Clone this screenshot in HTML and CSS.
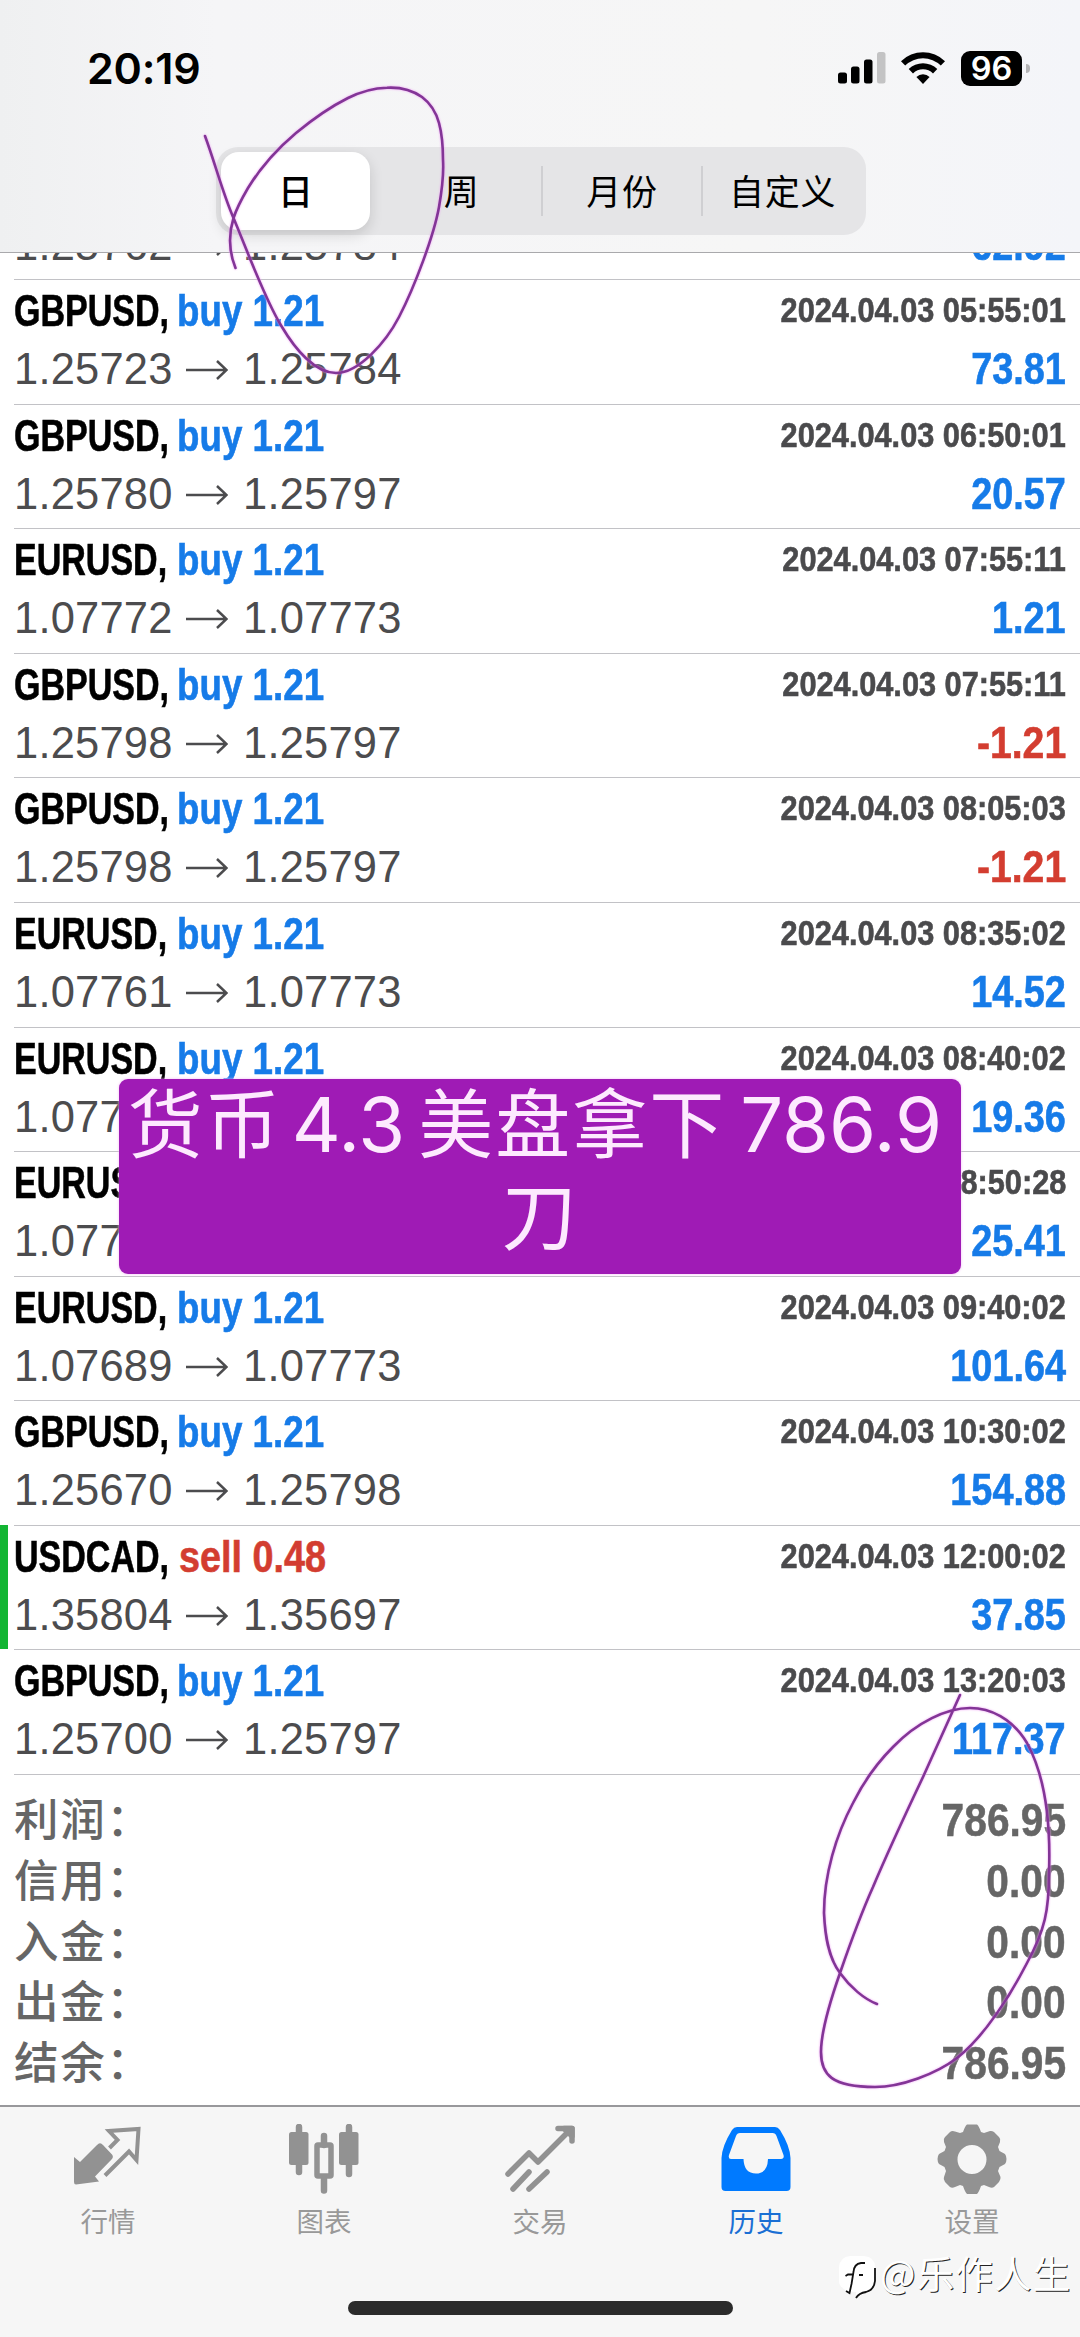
FILE: index.html
```html
<!DOCTYPE html>
<html lang="zh-CN">
<head>
<meta charset="utf-8">
<title>历史</title>
<link rel="stylesheet" href="styles.css">
</head>
<body>
<div class="phone">
  <header class="top">
    <div class="status">
      <span class="clock">20:19</span>
      <div class="status-icons">
        <svg class="signal" width="48" height="32" viewBox="0 0 48 32"><rect x="0" y="20.500" width="9" height="11" rx="2.500"/><rect x="13" y="14.500" width="8.500" height="17" rx="2.500"/><rect x="26" y="7.500" width="8.500" height="24" rx="2.500"/><rect x="39" y="0" width="8.500" height="31.500" rx="2.500" fill="#c3c3c4"/></svg>
        <svg class="wifi" width="46" height="34" viewBox="0 0 46 34"><path d="M1 10.200A31.500 31.500 0 0 1 45 10.200L40.800 14.600A25.400 25.400 0 0 0 5.200 14.600Z"/><path d="M8.700 18A20.400 20.400 0 0 1 37.300 18L33 22.400A14.300 14.300 0 0 0 13 22.400Z"/><path d="M16.400 26A9.500 9.500 0 0 1 29.600 26L23 33Z"/></svg>
        <div class="battery"><span>96</span></div>
        <i class="nub"></i>
      </div>
    </div>
    <nav class="segmented">
      <span class="seg on">日</span><span class="seg">周</span><span class="seg line">月份</span><span class="seg line">自定义</span>
    </nav>
  </header>

  <main class="list">
    <section class="deal cut"><div class="price"><span>1.25762</span><svg width="42" height="20" viewBox="0 0 42 20"><path d="M0 10H40M31 1L40.500 10L31 19"/></svg><span>1.25784</span></div><div class="val buy"><b>62.92</b></div></section>
    <section class="deal"><div class="sym"><b>GBPUSD,</b></div><div class="side buy"><b>buy 1.21</b></div><time><b>2024.04.03 05:55:01</b></time><div class="price"><span>1.25723</span><svg width="42" height="20" viewBox="0 0 42 20"><path d="M0 10H40M31 1L40.500 10L31 19"/></svg><span>1.25784</span></div><div class="val buy"><b>73.81</b></div></section>
    <section class="deal"><div class="sym"><b>GBPUSD,</b></div><div class="side buy"><b>buy 1.21</b></div><time><b>2024.04.03 06:50:01</b></time><div class="price"><span>1.25780</span><svg width="42" height="20" viewBox="0 0 42 20"><path d="M0 10H40M31 1L40.500 10L31 19"/></svg><span>1.25797</span></div><div class="val buy"><b>20.57</b></div></section>
    <section class="deal"><div class="sym"><b>EURUSD,</b></div><div class="side buy"><b>buy 1.21</b></div><time><b>2024.04.03 07:55:11</b></time><div class="price"><span>1.07772</span><svg width="42" height="20" viewBox="0 0 42 20"><path d="M0 10H40M31 1L40.500 10L31 19"/></svg><span>1.07773</span></div><div class="val buy"><b>1.21</b></div></section>
    <section class="deal"><div class="sym"><b>GBPUSD,</b></div><div class="side buy"><b>buy 1.21</b></div><time><b>2024.04.03 07:55:11</b></time><div class="price"><span>1.25798</span><svg width="42" height="20" viewBox="0 0 42 20"><path d="M0 10H40M31 1L40.500 10L31 19"/></svg><span>1.25797</span></div><div class="val loss"><b>-1.21</b></div></section>
    <section class="deal"><div class="sym"><b>GBPUSD,</b></div><div class="side buy"><b>buy 1.21</b></div><time><b>2024.04.03 08:05:03</b></time><div class="price"><span>1.25798</span><svg width="42" height="20" viewBox="0 0 42 20"><path d="M0 10H40M31 1L40.500 10L31 19"/></svg><span>1.25797</span></div><div class="val loss"><b>-1.21</b></div></section>
    <section class="deal"><div class="sym"><b>EURUSD,</b></div><div class="side buy"><b>buy 1.21</b></div><time><b>2024.04.03 08:35:02</b></time><div class="price"><span>1.07761</span><svg width="42" height="20" viewBox="0 0 42 20"><path d="M0 10H40M31 1L40.500 10L31 19"/></svg><span>1.07773</span></div><div class="val buy"><b>14.52</b></div></section>
    <section class="deal"><div class="sym"><b>EURUSD,</b></div><div class="side buy"><b>buy 1.21</b></div><time><b>2024.04.03 08:40:02</b></time><div class="price"><span>1.077</span></div><div class="val buy"><b>19.36</b></div></section>
    <section class="deal"><div class="sym"><b>EURUSD,</b></div><div class="side"></div><time><b>08:50:28</b></time><div class="price"><span>1.077</span></div><div class="val buy"><b>25.41</b></div></section>
    <section class="deal"><div class="sym"><b>EURUSD,</b></div><div class="side buy"><b>buy 1.21</b></div><time><b>2024.04.03 09:40:02</b></time><div class="price"><span>1.07689</span><svg width="42" height="20" viewBox="0 0 42 20"><path d="M0 10H40M31 1L40.500 10L31 19"/></svg><span>1.07773</span></div><div class="val buy"><b>101.64</b></div></section>
    <section class="deal"><div class="sym"><b>GBPUSD,</b></div><div class="side buy"><b>buy 1.21</b></div><time><b>2024.04.03 10:30:02</b></time><div class="price"><span>1.25670</span><svg width="42" height="20" viewBox="0 0 42 20"><path d="M0 10H40M31 1L40.500 10L31 19"/></svg><span>1.25798</span></div><div class="val buy"><b>154.88</b></div></section>
    <section class="deal tp"><div class="sym"><b>USDCAD,</b></div><div class="side loss"><b>sell 0.48</b></div><time><b>2024.04.03 12:00:02</b></time><div class="price"><span>1.35804</span><svg width="42" height="20" viewBox="0 0 42 20"><path d="M0 10H40M31 1L40.500 10L31 19"/></svg><span>1.35697</span></div><div class="val buy"><b>37.85</b></div></section>
    <section class="deal"><div class="sym"><b>GBPUSD,</b></div><div class="side buy"><b>buy 1.21</b></div><time><b>2024.04.03 13:20:03</b></time><div class="price"><span>1.25700</span><svg width="42" height="20" viewBox="0 0 42 20"><path d="M0 10H40M31 1L40.500 10L31 19"/></svg><span>1.25797</span></div><div class="val buy"><b>117.37</b></div></section>

    <dl class="summary">
      <div><dt>利润：</dt><dd>786.95</dd></div>
      <div><dt>信用：</dt><dd>0.00</dd></div>
      <div><dt>入金：</dt><dd>0.00</dd></div>
      <div><dt>出金：</dt><dd>0.00</dd></div>
      <div><dt>结余：</dt><dd>786.95</dd></div>
    </dl>
  </main>

  <nav class="tabs">
    <a class="tab"><svg width="72" height="72" viewBox="0 0 72 72"><path d="M2 33L8 38L25 21Q28 17.500 31 21L40 30.500Q42 33 39.500 35.500L23 52.500L27 57.500L4 60.500Q2 60.500 2 58Z"/><path d="M37.500 24L45.500 16L37 7L66.500 5L64.500 36L57 27.500L33 51.500" fill="none" stroke="#929292" stroke-width="4"/></svg>行情</a>
    <a class="tab"><svg width="72" height="72" viewBox="0 0 72 72"><path d="M11 3V48M61 3V50M36 12V21M36 55V66.500" fill="none" stroke="#929292" stroke-width="6.500" stroke-linecap="round"/><rect x="1" y="8" width="19.500" height="33" rx="2.500"/><rect x="51" y="8" width="19.500" height="33" rx="2.500"/><rect x="29" y="21" width="14" height="31" rx="1" fill="none" stroke="#929292" stroke-width="5.500"/></svg>图表</a>
    <a class="tab"><svg width="72" height="72" viewBox="0 0 72 72" fill="none" stroke="#929292" stroke-width="5.500" stroke-linecap="round" stroke-linejoin="round"><path d="M4 50L25 29L34 38L67 5M54 4.500H68V17M9 65L25 48M25 65L43 48"/><path d="M60 4.500H68V12Z" fill="#929292"/></svg>交易</a>
    <a class="tab active"><svg width="72" height="72" viewBox="0 0 72 72"><path fill-rule="evenodd" d="M17 3H55Q58 3 60 6Q70 22 70.500 34V63Q70.500 67 66.500 67H5.500Q1.500 67 1.500 63V34Q2 22 12 6Q14 3 17 3ZM20 9Q17 9 16 12L9 31Q8 35 11 35H23.500Q24 49.500 36 49.500Q47.500 49.500 48 35H61Q64.500 35 63.500 31L56.500 12Q55.500 9 52.500 9Z"/></svg>历史</a>
    <a class="tab"><svg width="72" height="72" viewBox="0 0 72 72"><path fill-rule="evenodd" d="M31 .5H41Q43 2 45 8L48 9L54 7Q56 6.500 58 8L63 13Q65 15 64 18L62 23L63.500 27L69 30Q70.500 32 70.500 35Q70.500 38 69 40L63.500 43L62 47L64.500 53Q65 55 63 58L58 63Q56 64.500 53 63L48 61L45 62Q43 68 41 70H31Q29 68 27 62L24 61L19 63Q16 64.500 14 63L9 58Q7 55 8 53L10 47L8.500 43L3 40Q1.500 38 1.500 35Q1.500 32 3 30L8.500 27L10 23L8 18Q7 15 9 13L14 8Q16 6.500 19 7.500L24 9L27 8Q29 2 31 .5ZM36 21A14.500 14.500 0 1 0 36 50A14.500 14.500 0 1 0 36 21Z"/></svg>设置</a>
    <i class="home"></i>
  </nav>

  <div class="caption"><p>货币<em class="a">4.3</em>美盘拿下<em class="b">786.9</em><br>刀</p></div>

  <svg class="ink" width="1080" height="2337" viewBox="0 0 1080 2337">
    <path d="M205 136C215 163 223 194 233.500 218C247 250 265 300 282 327C295 349 315 373 336 373C359 373 386 342 399 317C415 286 434 235 439 207C442 190 444 176 443 160C443 147 442 134 439 123C436 112 430 103 422 97C412 90 400 87 387 87.700C374 88 362 91 348 98C330 107 313 119 296 133C277 149 259 170 248 188C241 200 237 207 233.500 218C228 236 229 252 235.500 268"/>
    <path d="M960 1695C948 1721 936 1748 923 1777C905 1815 889 1849 873 1887C860 1916 850 1944 840 1973C833 1993 821 2030 821 2052C821 2075 832 2087 875 2087C901 2087 936 2074 957 2058C985 2036 1011 1994 1027 1963C1045 1930 1049 1910 1049 1873C1050 1845 1050 1785 1027 1743C1012 1718 990 1708 970 1708C947 1708 917 1722 893 1747C877 1763 864 1781 853 1803C836 1835 824 1875 824 1913C825 1935 828 1957 840 1973C850 1987 864 1999 877 2004"/>
  </svg>

  <div class="mark">
    <svg width="42" height="48" viewBox="0 0 42 48"><path d="M12 1H26Q37 2 37 12V27Q37 37 26 38L18 44V37L9 36Q1 32 1 26V12Q2 2 12 1Z" fill="#fff"/><path d="M27 8H23Q16 9 15.500 17L13.500 29L11.500 38L8 36M7.500 21L10 19.500H15M21 20H25M37 13V26Q36 35 28 37Q21 38 18 43" fill="none" stroke="#111" stroke-width="1.800"/></svg>
    <span>@乐作人生</span>
  </div>
</div>
</body>
</html>
```
FILE: styles.css
```css
* { box-sizing: border-box; }
body { margin: 0; background: #fff; font-family: "Liberation Sans", "Noto Sans CJK SC", sans-serif; }
.phone { position: relative; display: flex; flex-direction: column; width: 1080px; height: 2337px; overflow: hidden; background: #fff; }

.top { height: 253px; flex: none; background: linear-gradient(90deg, #eff0f1 0, #f5f5f7 20%, #f6f6f6 70%, #f4f5f9 100%); border-bottom: 1px solid #a9a9ac; }
.status { display: flex; justify-content: space-between; height: 147px; padding: 0 50px 0 87px; }
.clock { padding-top: 42px; font: 600 43px/52px Inter, sans-serif; color: #000; letter-spacing: -.2px; }
.status-icons { display: flex; align-items: center; height: 36px; margin-top: 50px; }
.signal { margin: 0 14px 0 0; }
.wifi { margin-right: 15px; }
.battery { width: 61px; height: 35px; border-radius: 9px; background: #000; color: #fff; text-align: center; font: 600 32.500px/35px Inter, sans-serif; }
.nub { width: 4px; height: 9px; margin-left: 4px; border-radius: 0 4px 4px 0; background: #b4b4b6; }

.segmented { display: flex; width: 650px; height: 88px; margin-left: 216px; padding: 5px; border-radius: 22px; background: #e5e5e7; }
.seg { position: relative; flex: 1 0 0; margin-right: 4px; text-align: center; font: 400 35px/76px "Noto Sans CJK SC", sans-serif; color: #000; }
.seg.line { letter-spacing: .8px; white-space: nowrap; }
.seg:last-child { margin-right: 0; }
.seg.on { flex: none; width: 149px; margin-right: 13px; border-radius: 18px; background: #fff; box-shadow: 0 5px 14px rgba(0,0,0,.14); font-weight: 500; }
.seg.line::before { content: ""; position: absolute; left: -3px; top: 14px; width: 2px; height: 50px; background: #cfcfd2; }

.list { display: flex; flex-direction: column; height: 1852px; flex: none; overflow: hidden; }
.deal { position: relative; flex: none; display: grid; grid-template: 62px 62.590px / 163px 1fr 300px; height: 124.590px; padding: 0 14px 0 14px; font-size: 43.500px; }
.deal.cut { grid-template-rows: 62.590px; height: 62.590px; margin-top: -36.500px; }
.deal::after { content: ""; position: absolute; left: 14px; right: 0; bottom: -1px; height: 1px; background: #c2c2c6; }
.deal.tp { border-left: 8px solid #13b533; padding-left: 6px; }
.deal.tp::after { left: 6px; }
.deal b { display: inline-block; white-space: nowrap; font-weight: 700; line-height: 50px; -webkit-text-stroke: .6px currentColor; }
.sym { padding-top: 7px; color: #000; }
.sym b { transform: scaleX(.782); transform-origin: 0 0; }
.side { padding-top: 7px; }
.side b { transform: scaleX(.845); transform-origin: 0 0; }
.side.loss b { transform: translateX(2px) scaleX(.868); }
.buy { color: #167be8; }
.loss { color: #d33d30; }
.deal time { display: flex; justify-content: flex-end; padding-top: 6px; font-size: 35.300px; color: #4a4a4c; }
.deal time b { transform: scaleX(.87); transform-origin: 100% 0; }
.price { grid-column: 1 / 3; display: flex; align-items: center; height: 50px; margin-top: 3px; line-height: 50px; font-size: 43.500px; color: #4c4c4e; }
.price span { width: 172px; letter-spacing: .2px; }
.price svg { margin: 2px 15px 0 0; fill: none; stroke: #4c4c4e; stroke-width: 2.500; }
.val { height: 50px; margin-top: 3px; text-align: right; }
.val b { transform: scaleX(.87); transform-origin: 100% 0; }
.val.loss b { transform: scaleX(.9); }

.summary { margin: 0; padding: 17px 14px 0 14px; }
.summary div { display: flex; justify-content: space-between; height: 60.800px; }
.summary dt { margin-top: -4px; font: 500 44.500px/60px "Noto Sans CJK SC", sans-serif; letter-spacing: 1.800px; color: #666; }
.summary dd { margin: 0; font: 700 45.500px/60px "Liberation Sans", sans-serif; color: #666; transform: scaleX(.895); transform-origin: 100% 0; -webkit-text-stroke: .5px currentColor; }

.tabs { position: relative; flex: 1; display: flex; border-top: 2px solid #98989b; background: #f6f6f6; }
.tab { flex: 1; display: flex; flex-direction: column; align-items: center; padding-top: 17px; font: 400 27.500px/40px "Noto Sans CJK SC", sans-serif; color: #999; fill: #929292; }
.tab svg { margin-bottom: 4px; }
.tab.active { color: #1a6fd4; fill: #007aff; }
.home { position: absolute; left: 348px; top: 194px; width: 385px; height: 14px; border-radius: 7px; background: #2b2b2b; }

.caption { position: absolute; left: 119px; top: 1079px; width: 842px; height: 195px; border-radius: 9px; background: #9f1bb5; box-shadow: 0 0 3px #f3b8f8; color: #fdeafe; text-align: center; white-space: nowrap; font: 400 75px/92px "Noto Sans CJK SC", sans-serif; letter-spacing: 2px; }
.caption p { margin: -5px 0 0; }
.caption em { font: 400 76px/1px Inter, sans-serif; letter-spacing: 0; }
.caption .a { margin: 0 13px 0 10px; }
.caption .b { margin: 0 10px 0 14px; }
.ink { position: absolute; left: 0; top: 0; fill: none; stroke: #833597; stroke-width: 2.600; stroke-linecap: round; filter: drop-shadow(0 0 1px #f0a0f5); }
.mark { position: absolute; left: 838px; top: 2255px; display: flex; color: #fff; font: 400 37.500px/46px "Noto Sans CJK SC", sans-serif; letter-spacing: 1.200px; text-shadow: 1px 1px 0 #222; white-space: nowrap; }
.mark span { margin-top: -6px; }
```
